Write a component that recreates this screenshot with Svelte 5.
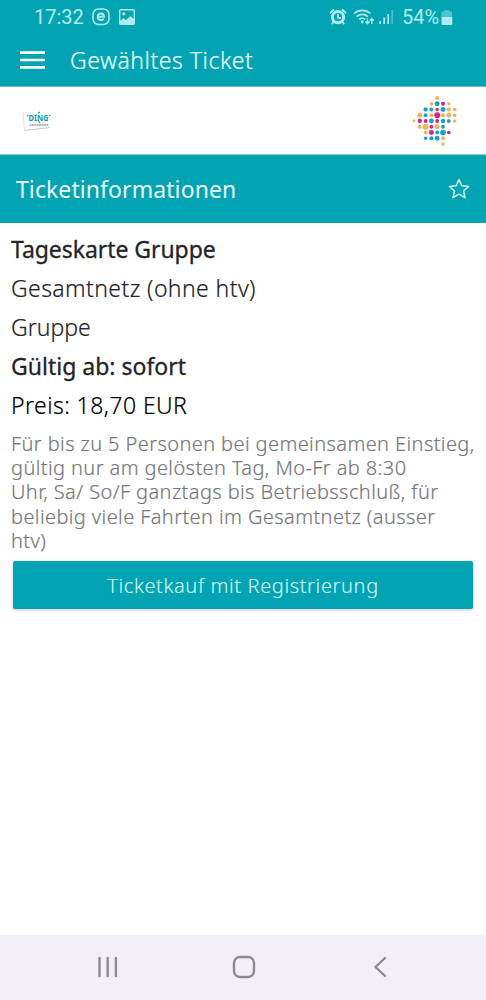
<script lang="ts">
	interface Line {
		text: string
		spacing: number
		bold?: boolean
		dark?: boolean
	}

	const lines: Array<Line> = [
		{ text: 'Tageskarte Gruppe', spacing: -0.06, bold: true },
		{ text: 'Gesamtnetz (ohne htv)', spacing: 0.4 },
		{ text: 'Gruppe', spacing: 0 },
		{ text: 'Gültig ab: sofort', spacing: 0, bold: true },
		{ text: 'Preis: 18,70 EUR', spacing: 0.43, dark: true }
	]

	const description: Array<string> = [
		'Für bis zu 5 Personen bei gemeinsamen Einstieg,',
		'gültig nur am gelösten Tag, Mo-Fr ab 8:30',
		'Uhr, Sa/ So/F ganztags bis Betriebsschluß, für',
		'beliebig viele Fahrten im Gesamtnetz (ausser',
		'htv)'
	]

	// Dots of the logo: column, row, radius, colour
	const o = '#eeb55c'
	const b = '#1c9fc0'
	const p = '#d0268a'
	const dots: Array<[number, number, number, string]> = [
		[4, 0, 1.9, o],
		[3, 1, 1.7, o], [4, 1, 2.3, b], [5, 1, 1.9, p], [6, 1, 1.6, o],
		[2, 2, 2, b], [3, 2, 1.9, b], [4, 2, 1.6, p], [5, 2, 2.3, b], [6, 2, 1.9, o], [7, 2, 1.7, o],
		[1, 3, 2.3, o], [2, 3, 1.8, b], [3, 3, 1.9, o], [4, 3, 2.7, p], [5, 3, 1.9, o], [6, 3, 2.2, o], [7, 3, 1.7, o],
		[0, 4, 1.3, o], [1, 4, 2, p], [2, 4, 1.8, p], [3, 4, 2.2, b], [4, 4, 1.8, p], [5, 4, 2.1, b], [6, 4, 1.8, b], [7, 4, 1.6, o],
		[1, 5, 1.8, o], [2, 5, 2.7, o], [3, 5, 1.8, p], [4, 5, 2.3, o], [5, 5, 1.8, b],
		[2, 6, 1.8, o], [3, 6, 2.3, p], [4, 6, 1.8, b], [5, 6, 2.6, b], [6, 6, 1.7, p],
		[2, 7, 1.6, b], [3, 7, 1.9, b], [4, 7, 2.2, b], [5, 7, 1.8, o],
		[5, 8, 1.6, o]
	]
</script>

<div class="screen">
	<div class="status">
		<span class="time">17:32</span>
		<svg class="app" width="18" height="18" viewBox="0 0 18 18">
			<rect x="1" y="1" width="16" height="15.5" rx="5.5" fill="none" stroke="currentColor" stroke-width="1.5" />
			<path d="M5.8 8.8h6.2c0-2-1.2-3.3-3-3.3S5.8 6.9 5.8 8.8s1.3 3.3 3.2 3.3c1.2 0 2.1-.4 2.8-1.2" fill="none" stroke="currentColor" stroke-width="2" />
		</svg>
		<svg class="photo" width="16" height="16" viewBox="0 0 16 16">
			<rect x=".7" y=".7" width="14.6" height="14.6" rx="1" fill="none" stroke="currentColor" stroke-width="1.4" />
			<path d="M1 12l3.5-3 2.5 2 4.5-4 3.5 3.5V15H1z" fill="currentColor" />
			<circle cx="4.8" cy="4.8" r="1.6" fill="currentColor" />
		</svg>
		<svg class="alarm" width="18" height="18" viewBox="0 0 18 18">
			<circle cx="9" cy="9.2" r="5.6" fill="none" stroke="currentColor" stroke-width="3" />
			<path d="M9 6v3.8h3M1 5.2l4-3.7M17 5.2l-4-3.7M4.5 14l-1.7 2.3M13.5 14l1.7 2.3" fill="none" stroke="currentColor" stroke-width="1.8" />
		</svg>
		<svg class="wifi" width="22" height="18" viewBox="0 0 22 18">
			<path d="M1 5.5c4.5-4.3 12-4.3 16.5 0M3.6 8.6c3.3-3 8-3 11.3 0M6.2 11.5c1.8-1.6 4.3-1.6 6 0" fill="none" stroke="currentColor" stroke-width="1.7" />
			<circle cx="9.2" cy="13.8" r="1.5" fill="currentColor" />
			<path d="M14.5 10.5v5M12.5 13.5l2 2.3 2-2.3M18.8 16v-5M16.9 12.8l1.9-2.2 1.9 2.2" fill="none" stroke="currentColor" stroke-width="1.4" />
		</svg>
		<svg class="signal" width="15" height="16" viewBox="0 0 15 16">
			<path d="M1.2 12v3M5.2 8.5V15M9.2 5v10" stroke="currentColor" stroke-width="1.7" />
			<path d="M13.2 1v14" stroke="currentColor" stroke-width="1.7" opacity=".4" />
		</svg>
		<span class="percent">54%</span>
		<svg class="battery" width="12" height="17" viewBox="0 0 12 17">
			<path d="M3.5 1h5v1.5H11v6H.5v-6h3z" fill="currentColor" opacity=".45" />
			<path d="M.5 8h10.8v7a1 1 0 0 1-1 1H1.5a1 1 0 0 1-1-1z" fill="currentColor" />
		</svg>
	</div>

	<header class="toolbar">
		<svg width="25" height="18" viewBox="0 0 25 18">
			<path d="M0 1.7h25M0 9h25M0 16.3h25" stroke="#fff" stroke-width="2.7" />
		</svg>
		<h1>Gewähltes Ticket</h1>
	</header>

	<div class="logos">
		<svg width="30" height="22" viewBox="0 0 30 22">
			<path d="M1 2.5L2.5 20.5" stroke="#dfe2e3" stroke-width="1" />
			<path d="M2.5 20.5L28 17.5" stroke="#c3c8ca" stroke-width="1" />
			<path d="M1 2.5L5 2" stroke="#e3e5e6" stroke-width=".7" />
			<text x="6.5" y="11" textLength="20" lengthAdjust="spacingAndGlyphs" class="ding">DING</text>
			<path d="M5 5l1.3 1M28.5 5l-1.3 1M16 3.5l2-1.5" stroke="#1aa0a8" stroke-width="1.2" />
			<path d="M16 10l2 3" stroke="#1aa0a8" stroke-width="1.2" />
			<path d="M7.5 15H27" stroke="#6d797d" stroke-width="1" stroke-dasharray="2 .4" />
		</svg>
		<svg width="50" height="54" viewBox="0 0 50 54">
			{#each dots as [col, row, r, color]}
				<circle cx={3 + col * 5.8} cy={4 + row * 5.75} r={r * 1.08} fill={color} />
			{/each}
		</svg>
	</div>

	<div class="heading">
		<h2>Ticketinformationen</h2>
		<svg width="24" height="24" viewBox="0 0 24 24">
			<path d="M12 2.6l2.8 6.2 6.8.7-5.1 4.5 1.5 6.7-6-3.5-6 3.5 1.5-6.7-5.1-4.5 6.8-.7z" fill="none" stroke="#d5f6f8" stroke-width="1.5" stroke-linejoin="round" />
		</svg>
	</div>

	<main>
		{#each lines as line}
			<div class="line" class:bold={line.bold} class:dark={line.dark}>
				<span style:letter-spacing={`${line.spacing}px`}>{line.text}</span>
			</div>
		{/each}
		<p>{description.join('\n')}</p>
		<button>Ticketkauf mit Registrierung</button>
	</main>

	<nav>
		<svg width="22" height="22" viewBox="0 0 22 22">
			<path d="M2.5 2v18M10.7 2v18M18.9 2v18" />
		</svg>
		<svg width="24" height="24" viewBox="0 0 24 24">
			<rect x="2" y="2" width="20" height="20" rx="6" />
		</svg>
		<svg width="14" height="22" viewBox="0 0 14 22">
			<path d="M12 2L2.5 11l9.5 9" />
		</svg>
	</nav>
</div>

<style>
	:global(body) {
		margin: 0;
		background: #fff;
	}

	.screen {
		width: 486px;
		height: 1000px;
		display: flex;
		flex-direction: column;
		overflow: hidden;
		background: #fff;
		font-family: 'Noto Sans', 'Open Sans', sans-serif;
		font-weight: 300;
		white-space: nowrap;
	}

	svg {
		display: block;
		flex: none;
	}

	.status {
		height: 34px;
		flex: none;
		display: flex;
		align-items: center;
		background: #02a4b3;
		color: #b0ebef;
		font: 400 20px/34px Roboto, sans-serif;
	}

	.time {
		width: 51px;
		margin-left: 34px;
	}

	.app {
		margin-left: 7px;
	}

	.photo {
		margin-left: 9px;
	}

	.alarm {
		margin-left: 194px;
	}

	.wifi {
		margin-left: 6px;
	}

	.signal {
		margin-left: 4px;
	}

	.percent {
		width: 37px;
		margin-left: 8px;
	}

	.battery {
		margin-left: 2px;
	}

	.toolbar {
		height: 52px;
		flex: none;
		display: flex;
		align-items: center;
		gap: 25px;
		padding-left: 20px;
		background: #02a4b3;
		border-bottom: 1px solid #6bb8bf;
	}

	h1,
	h2 {
		margin: 0;
		color: #e8fcfd;
		font-size: 23px;
		line-height: 32px;
	}

	h1 {
		font-weight: 300;
		letter-spacing: 0.53px;
		-webkit-text-stroke: 0.2px #e8fcfd;
	}

	h2 {
		font-weight: 400;
		letter-spacing: 0.08px;
	}

	.logos {
		height: 67px;
		flex: none;
		display: flex;
		align-items: center;
		justify-content: space-between;
		padding: 0 25px 0 22px;
	}

	.ding {
		font: 700 9px 'Noto Sans', sans-serif;
		fill: #159ca5;
	}

	.heading {
		height: 69px;
		flex: none;
		box-sizing: border-box;
		display: flex;
		align-items: center;
		justify-content: space-between;
		padding: 0 15px 0 16px;
		border-top: 1px solid #9fc9cd;
		background: #02a4b3;
	}

	main {
		flex: 1;
		padding: 9px 13px 0 11px;
	}

	.line {
		height: 39.1px;
		font-size: 23px;
		line-height: 35px;
		color: #242428;
		-webkit-text-stroke: 0.2px currentColor;
	}

	.bold {
		font-weight: 400;
		-webkit-text-stroke-width: 0.3px;
	}

	.dark {
		color: #000;
	}

	p {
		margin: 4.5px 0 0;
		font-size: 20px;
		line-height: 24.2px;
		letter-spacing: 0.4px;
		color: #77777b;
		-webkit-text-stroke: 0.2px currentColor;
		white-space: pre;
	}

	button {
		display: block;
		width: 460px;
		height: 48px;
		margin: 8px 0 0 2px;
		padding: 1px 0 0;
		border: 0;
		border-radius: 2px;
		background: #02a4b3;
		box-shadow: 0 1px 3px rgba(0, 0, 0, 0.25);
		color: #d4f6f8;
		font: 300 20px/48px 'Noto Sans', 'Open Sans', sans-serif;
		letter-spacing: 0.62px;
		-webkit-text-stroke: 0.1px currentColor;
	}

	nav {
		height: 65px;
		flex: none;
		box-sizing: border-box;
		display: grid;
		grid-template-columns: 136px 136px 136px;
		justify-content: center;
		align-items: center;
		justify-items: center;
		padding: 0 0 1px 2px;
		background: #f2f0f4;
	}

	nav svg {
		fill: none;
		stroke: #8c8a90;
		stroke-width: 2.4;
		stroke-linecap: round;
		stroke-linejoin: round;
	}
</style>
